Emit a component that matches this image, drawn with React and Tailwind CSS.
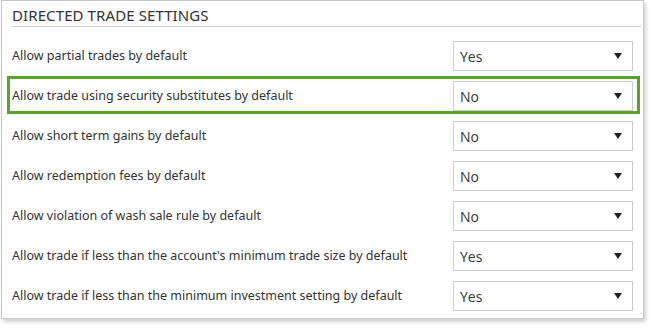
import React from 'react';

const rows = [
  { label: 'Allow partial trades by default', value: 'Yes' },
  { label: 'Allow trade using security substitutes by default', value: 'No', highlight: true },
  { label: 'Allow short term gains by default', value: 'No' },
  { label: 'Allow redemption fees by default', value: 'No' },
  { label: 'Allow violation of wash sale rule by default', value: 'No' },
  { label: "Allow trade if less than the account's minimum trade size by default", value: 'Yes' },
  { label: 'Allow trade if less than the minimum investment setting by default', value: 'Yes' },
];

function Select({ value }) {
  return (
    <div className="w-[180px] h-[30px] border border-[#cccccc] bg-white flex items-center justify-between pl-[6px] pr-[10px]">
      <span className="text-[14px] text-[#333333] font-['Open_Sans',sans-serif]">{value}</span>
      <svg width="8" height="6" viewBox="0 0 8 6">
        <path d="M0 0 L8 0 L4 6 Z" fill="#222222" />
      </svg>
    </div>
  );
}

export default function App() {
  return (
    <div className="bg-white w-[653px] h-[329px] pl-[1px]">
      <div className="w-[643px] h-[319px] border border-[#c8c8c8] bg-white shadow-[2px_3px_4px_rgba(0,0,0,0.18)] font-['Noto_Sans',sans-serif] text-[#333333]">
        <div className="ml-[10px] mr-[2px] pt-[5px] h-[26px] border-b border-[#cfcfcf]">
          <h2 className="text-[15px] leading-[18px] tracking-[0.1px]">DIRECTED TRADE SETTINGS</h2>
        </div>
        <div className="pt-[9px]">
          {rows.map((r) => (
            <div key={r.label} className="relative h-[40px] flex items-center justify-between pl-[10px] pr-[10px]">
              <span className="text-[12.5px]">{r.label}</span>
              <Select value={r.value} />
              {r.highlight && (
                <div className="absolute left-[5px] right-[3px] top-[0px] bottom-[2px] border-[3px] border-[#5ba22a] pointer-events-none" />
              )}
            </div>
          ))}
        </div>
      </div>
    </div>
  );
}
